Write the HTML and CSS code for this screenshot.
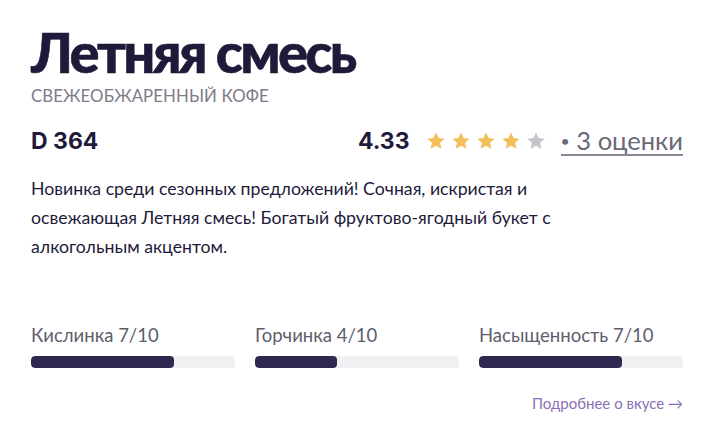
FILE: index.html
```html
<!DOCTYPE html>
<html lang="ru">
<head>
<meta charset="utf-8">
<link rel="stylesheet" href="styles.css">
</head>
<body>
<div class="card">
  <h1 class="title">Летняя смесь</h1>
  <div class="subtitle">СВЕЖЕОБЖАРЕННЫЙ КОФЕ</div>
  <div class="meta">
    <div class="price">D 364</div>
    <div class="rating">
      <span class="score">4.33</span>
      <span class="stars">
        <svg class="star on" viewBox="0 0 24 24"><path d="M12 1.8l3.1 6.6 7.2.8-5.4 4.9 1.5 7.1L12 17.6l-6.4 3.6 1.5-7.1L1.7 9.2l7.2-.8z"/></svg>
        <svg class="star on" viewBox="0 0 24 24"><path d="M12 1.8l3.1 6.6 7.2.8-5.4 4.9 1.5 7.1L12 17.6l-6.4 3.6 1.5-7.1L1.7 9.2l7.2-.8z"/></svg>
        <svg class="star on" viewBox="0 0 24 24"><path d="M12 1.8l3.1 6.6 7.2.8-5.4 4.9 1.5 7.1L12 17.6l-6.4 3.6 1.5-7.1L1.7 9.2l7.2-.8z"/></svg>
        <svg class="star on" viewBox="0 0 24 24"><path d="M12 1.8l3.1 6.6 7.2.8-5.4 4.9 1.5 7.1L12 17.6l-6.4 3.6 1.5-7.1L1.7 9.2l7.2-.8z"/></svg>
        <svg class="star off" viewBox="0 0 24 24"><path d="M12 1.8l3.1 6.6 7.2.8-5.4 4.9 1.5 7.1L12 17.6l-6.4 3.6 1.5-7.1L1.7 9.2l7.2-.8z"/></svg>
      </span>
      <a class="reviews" href="#"><span class="dot">•</span> 3 оценки</a>
    </div>
  </div>
  <p class="desc">Новинка среди сезонных предложений! Сочная, искристая и освежающая Летняя смесь! Богатый фруктово-ягодный букет с алкогольным акцентом.</p>
  <div class="taste">
    <div class="metric">
      <div class="label">Кислинка 7/10</div>
      <div class="track"><div class="fill" style="width:70%"></div></div>
    </div>
    <div class="metric">
      <div class="label">Горчинка 4/10</div>
      <div class="track"><div class="fill" style="width:40%"></div></div>
    </div>
    <div class="metric">
      <div class="label">Насыщенность 7/10</div>
      <div class="track"><div class="fill" style="width:70%"></div></div>
    </div>
  </div>
  <div class="more-row"><a class="more" href="#">Подробнее о вкусе →</a></div>
</div>
</body>
</html>
```

FILE: styles.css
```css
html, body {
  margin: 0;
  padding: 0;
  background: #ffffff;
}
body {
  font-family: "Lato", "Noto Sans", sans-serif;
  color: #1e1b3a;
}
.card {
  width: 652px;
  margin-left: 31px;
  padding-top: 22px;
}
.title {
  margin: 0;
  font-family: "Lato", "Noto Sans", sans-serif;
  font-weight: 900;
  font-size: 56px;
  line-height: 60px;
  letter-spacing: -2.6px;
  color: #1e1b3a;
  -webkit-text-stroke: 0.6px #1e1b3a;
}
.subtitle {
  margin-top: 4px;
  font-size: 16.8px;
  line-height: 20px;
  color: #7d7b87;
  letter-spacing: 0.1px;
}
.meta {
  display: flex;
  justify-content: space-between;
  align-items: center;
  margin-top: 18px;
  height: 34px;
}
.price, .score {
  font-family: "Inter", sans-serif;
  font-weight: 700;
  font-size: 23px;
  color: #1e1b3a;
}
.rating {
  display: flex;
  align-items: center;
}
.stars {
  display: flex;
  gap: 5px;
  margin-left: 16px;
  margin-right: 15px;
}
.star {
  width: 20px;
  height: 20px;
}
.star.on { fill: #f2bf5b; }
.star.off { fill: #c4c5cb; }
.reviews {
  font-size: 25.5px;
  color: #6b6878;
  text-decoration: none;
  border-bottom: 2px solid #8a8896;
  line-height: 26px;
}
.dot {
  font-size: 16px;
  vertical-align: 3px;
}
.desc {
  margin: 16px 0 0;
  font-size: 17.7px;
  line-height: 29px;
  color: #1e1b3a;
  width: 560px;
}
.taste {
  display: grid;
  grid-template-columns: repeat(3, 1fr);
  column-gap: 20px;
  margin-top: 62px;
}
.label {
  font-size: 18.5px;
  line-height: 24px;
  color: #5e5d6b;
}
.track {
  margin-top: 9px;
  height: 12px;
  border-radius: 4px;
  background: #f1f1f3;
  overflow: hidden;
}
.fill {
  height: 100%;
  border-radius: 4px;
  background: #2d2951;
}
.more-row {
  display: flex;
  justify-content: flex-end;
  margin-top: 26px;
}
.more {
  font-size: 15px;
  color: #8b70b6;
  text-decoration: none;
}
```
